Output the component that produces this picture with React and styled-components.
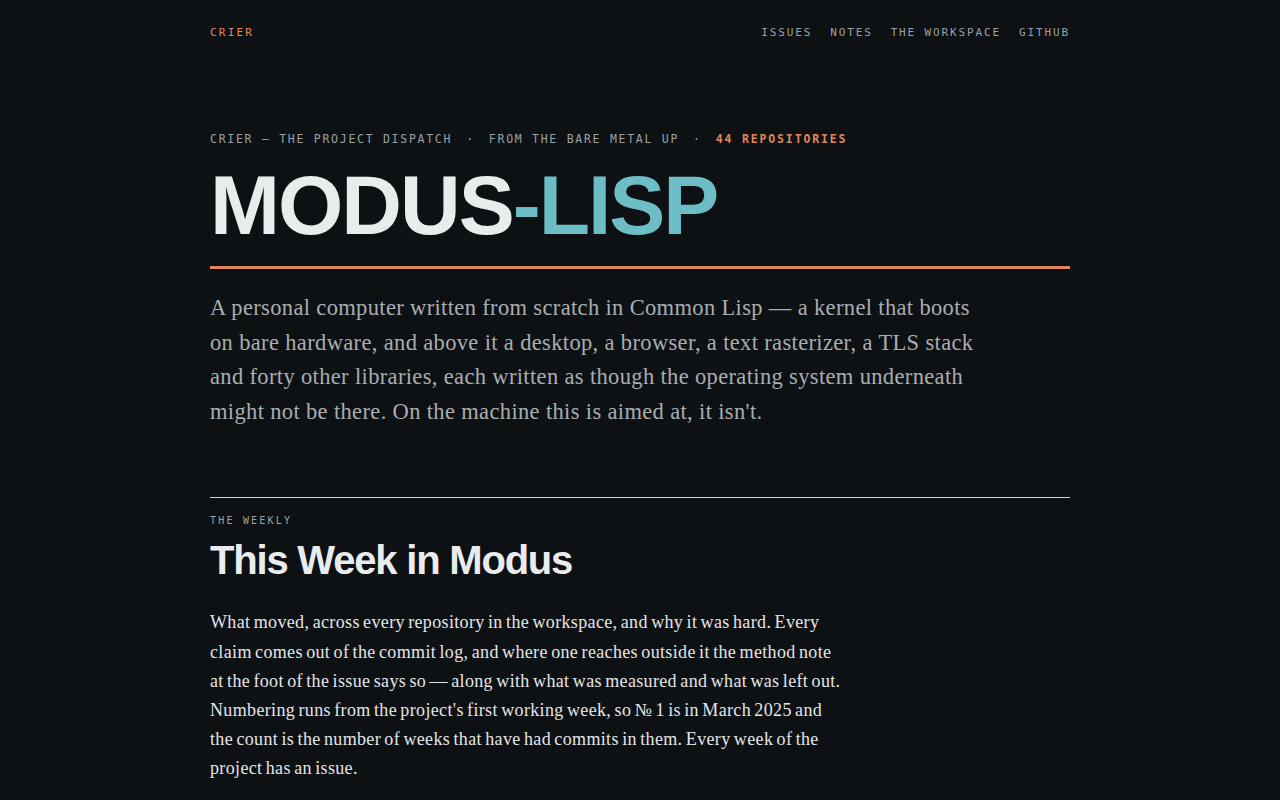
import styled, { createGlobalStyle } from "styled-components";

const GlobalStyle = createGlobalStyle`
  html, body {
    margin: 0;
    padding: 0;
    background: #0e1114;
  }
  body {
    font-family: "Liberation Serif", serif;
    color: #e6e8e8;
  }
`;

const Page = styled.div`
  width: 860px;
  margin: 0 auto;
  min-height: 800px;
`;

const TopBar = styled.header`
  display: flex;
  align-items: center;
  justify-content: space-between;
  height: 64px;
`;

const Mono = styled.span`
  font-family: "DejaVu Sans Mono", monospace;
  text-transform: uppercase;
  font-size: ${(p) => p.$size || 11}px;
  letter-spacing: ${(p) => p.$spacing || 0.15}em;
  color: ${(p) => p.$color || "#9aa0a4"};
  font-weight: ${(p) => (p.$bold ? 700 : 400)};
`;

const Nav = styled.nav`
  display: flex;
  gap: 18px;
`;

const NavLink = styled.a`
  font-family: "DejaVu Sans Mono", monospace;
  font-size: 11px;
  letter-spacing: 0.17em;
  color: #9aa0a4;
  text-decoration: none;
`;

const Hero = styled.section`
  padding-top: 66px;
`;

const MetaLine = styled.div`
  display: flex;
  align-items: center;
  gap: 14px;
  height: 18px;
`;

const Title = styled.h1`
  margin: 12px 0 0;
  font-family: "Liberation Sans", Arial, sans-serif;
  font-weight: 700;
  font-size: 84px;
  line-height: 90px;
  letter-spacing: -2px;
  color: #e9ecec;
  padding-bottom: 16px;
  border-bottom: 3px solid #e0875a;
`;

const Accent = styled.span`
  color: #6cbdc6;
`;

const Lead = styled.p`
  margin: 22px 0 0;
  max-width: 778px;
  font-size: 22.5px;
  line-height: 34.6px;
  letter-spacing: 0.35px;
  color: #a9aeb1;
`;

const Section = styled.section`
  margin-top: 68px;
  border-top: 1px solid #cfd3d5;
  padding-top: 12px;
`;

const SectionTitle = styled.h2`
  margin: 8px 0 0;
  font-family: "Liberation Sans", Arial, sans-serif;
  font-weight: 700;
  font-size: 40px;
  line-height: 48px;
  letter-spacing: -1.2px;
  color: #e9ecec;
`;

const Body = styled.p`
  margin: 24px 0 0;
  max-width: 636px;
  font-size: 18px;
  line-height: 29.2px;
  letter-spacing: 0.35px;
  word-spacing: -1.5px;
  color: #e3e5e6;
`;

export default function App() {
  return (
    <>
      <GlobalStyle />
      <Page>
        <TopBar>
          <Mono $color="#e0875a" $spacing={0.2}>Crier</Mono>
          <Nav>
            <NavLink href="#">ISSUES</NavLink>
            <NavLink href="#">NOTES</NavLink>
            <NavLink href="#">THE WORKSPACE</NavLink>
            <NavLink href="#">GITHUB</NavLink>
          </Nav>
        </TopBar>
        <Hero>
          <MetaLine>
            <Mono $size={11.5}>Crier — the project dispatch</Mono>
            <Mono $size={11.5}>·</Mono>
            <Mono $size={11.5}>From the bare metal up</Mono>
            <Mono $size={11.5}>·</Mono>
            <Mono $size={11.5} $color="#e0875a" $bold $spacing={0.16}>44 repositories</Mono>
          </MetaLine>
          <Title>
            MODUS<Accent>-LISP</Accent>
          </Title>
          <Lead>
            A personal computer written from scratch in Common Lisp — a kernel
            that boots on bare hardware, and above it a desktop, a browser, a
            text rasterizer, a TLS stack and forty other libraries, each written
            as though the operating system underneath might not be there. On the
            machine this is aimed at, it isn't.
          </Lead>
        </Hero>
        <Section>
          <Mono $size={10} $spacing={0.22}>The weekly</Mono>
          <SectionTitle>This Week in Modus</SectionTitle>
          <Body>
            What moved, across every repository in the workspace, and why it was
            hard. Every claim comes out of the commit log, and where one reaches
            outside it the method note at the foot of the issue says so — along
            with what was measured and what was left out. Numbering runs from the
            project's first working week, so № 1 is in March 2025 and the count
            is the number of weeks that have had commits in them. Every week of
            the project has an issue.
          </Body>
        </Section>
      </Page>
    </>
  );
}
